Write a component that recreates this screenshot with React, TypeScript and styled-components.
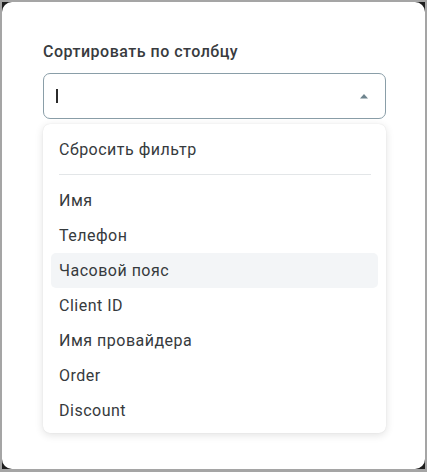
import styled, { createGlobalStyle } from "styled-components";

const GlobalStyle = createGlobalStyle`
  html, body {
    margin: 0;
    padding: 0;
    background: #a5a5a5;
  }
  * {
    box-sizing: border-box;
  }
`;

const Frame = styled.div`
  width: 427px;
  height: 472px;
  border: 2px solid #a5a5a5;
  border-bottom-width: 3px;
  background: #1e1e1e;
`;

const Card = styled.div`
  height: 100%;
  background: #ffffff;
  border-radius: 10px;
  padding: 40px 39px 0 41px;
  font-family: Roboto, "Noto Sans", sans-serif;
`;

const Label = styled.div`
  font-size: 16px;
  font-weight: 500;
  color: #383b3e;
  line-height: 20px;
  margin-bottom: 11px;
  letter-spacing: 0.5px;
`;

const Field = styled.div`
  height: 46px;
  border: 1px solid #8a9ea8;
  border-radius: 7px;
  display: flex;
  align-items: center;
  padding: 0 16px 0 12px;
`;

const Caret = styled.span`
  width: 1.5px;
  height: 14px;
  background: #2b2b2b;
`;

const Arrow = styled.svg`
  margin-left: auto;
  width: 10px;
  height: 6px;
  color: #6e848e;
`;

const Menu = styled.div`
  margin-top: 5px;
  background: #ffffff;
  border-radius: 7px;
  padding: 8px 8px 5px;
  box-shadow: 0 2px 8px rgba(0, 0, 0, 0.12), 0 0 1px rgba(0, 0, 0, 0.12);
`;

const Item = styled.div<{ $active?: boolean }>`
  height: 35px;
  display: flex;
  align-items: center;
  padding-left: 8px;
  border-radius: 5px;
  font-size: 16px;
  color: #363a3d;
  letter-spacing: 0.5px;
  background: ${(p) => (p.$active ? "#f3f5f7" : "transparent")};
`;

const Divider = styled.div`
  height: 1px;
  background: #e3e6e8;
  margin: 7px 7px 8px 8px;
`;

const options = [
  "Имя",
  "Телефон",
  "Часовой пояс",
  "Client ID",
  "Имя провайдера",
  "Order",
  "Discount",
];

export default function App() {
  return (
    <>
      <GlobalStyle />
      <Frame>
        <Card>
          <Label>Сортировать по столбцу</Label>
          <Field>
            <Caret />
            <Arrow viewBox="0 0 10 6">
              <path d="M1 5.5 L5 1 L9 5.5 Z" fill="currentColor" />
            </Arrow>
          </Field>
          <Menu>
            <Item>Сбросить фильтр</Item>
            <Divider />
            {options.map((o) => (
              <Item key={o} $active={o === "Часовой пояс"}>
                {o}
              </Item>
            ))}
          </Menu>
        </Card>
      </Frame>
    </>
  );
}
